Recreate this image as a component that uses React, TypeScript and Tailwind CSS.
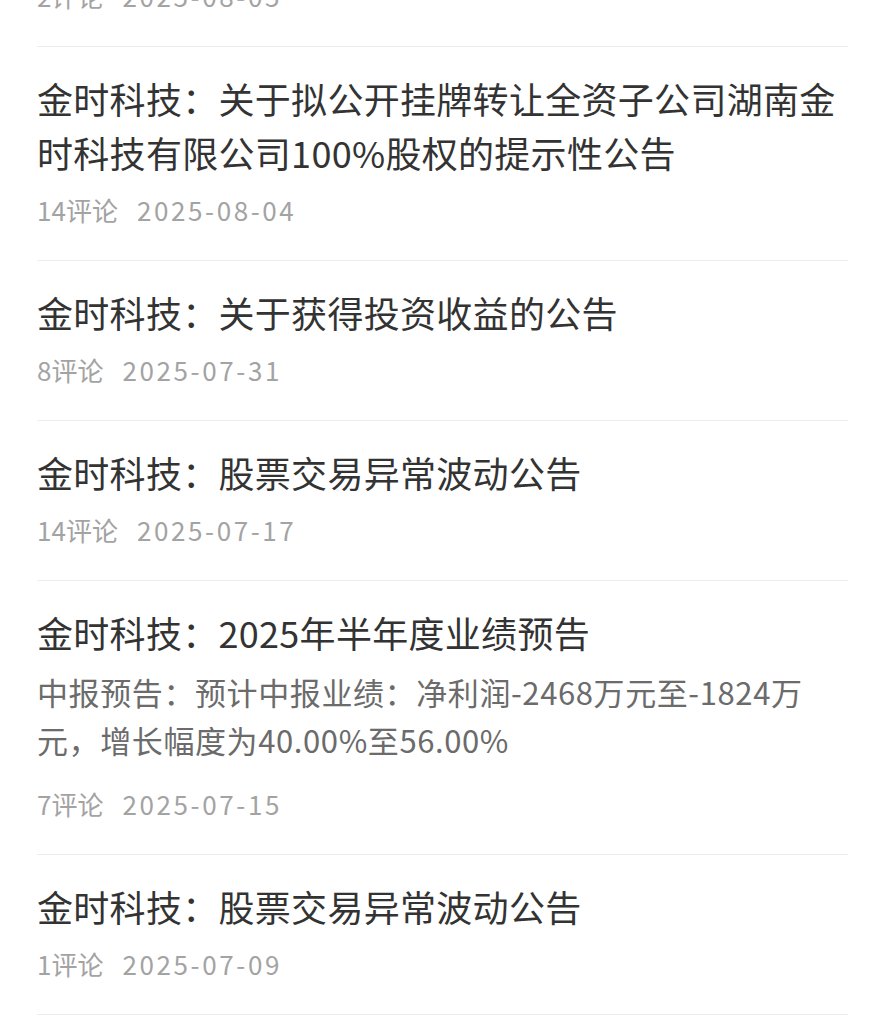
const font = { fontFamily: '"Noto Sans CJK SC", "Noto Sans", sans-serif' };

type Notice = {
  id: number;
  title: string;
  summary?: string;
  comments: number;
  date: string;
};

const notices: Notice[] = [
  {
    id: 1,
    title: "金时科技：关于拟公开挂牌转让全资子公司湖南金时科技有限公司100%股权的提示性公告",
    comments: 14,
    date: "2025-08-04",
  },
  { id: 2, title: "金时科技：关于获得投资收益的公告", comments: 8, date: "2025-07-31" },
  { id: 3, title: "金时科技：股票交易异常波动公告", comments: 14, date: "2025-07-17" },
  {
    id: 4,
    title: "金时科技：2025年半年度业绩预告",
    summary: "中报预告：预计中报业绩：净利润-2468万元至-1824万元，增长幅度为40.00%至56.00%",
    comments: 7,
    date: "2025-07-15",
  },
  { id: 5, title: "金时科技：股票交易异常波动公告", comments: 1, date: "2025-07-09" },
];

function Meta({ comments, date }: { comments: number; date: string }) {
  return (
    <div className="flex gap-[19px] text-[26px] leading-[36px] text-[#a3a3a3]">
      <span>{comments}评论</span>
      <span className="tracking-[2.6px]">{date}</span>
    </div>
  );
}

export default function App() {
  return (
    <div className="min-h-[1024px] overflow-hidden bg-white px-[37px]" style={font}>
      {/* 上一条只露出底部 */}
      <div className="-mt-[22px] border-b border-[#ededed] pb-[32px]">
        <Meta comments={2} date="2025-08-05" />
      </div>

      {notices.map((item) => (
        <div key={item.id} className="border-b border-[#ededed] pt-[24px] pb-[32px]">
          <h3 className="text-[36px] leading-[54px] tracking-[0.3px] text-[#333333]">{item.title}</h3>
          {item.summary && (
            <p className="mt-[9px] text-[31px] leading-[48px] tracking-[0.6px] text-[#6b6b6b]">
              {item.summary}
            </p>
          )}
          <div className={item.summary ? "mt-[22px]" : "mt-[13px]"}>
            <Meta comments={item.comments} date={item.date} />
          </div>
        </div>
      ))}
    </div>
  );
}
